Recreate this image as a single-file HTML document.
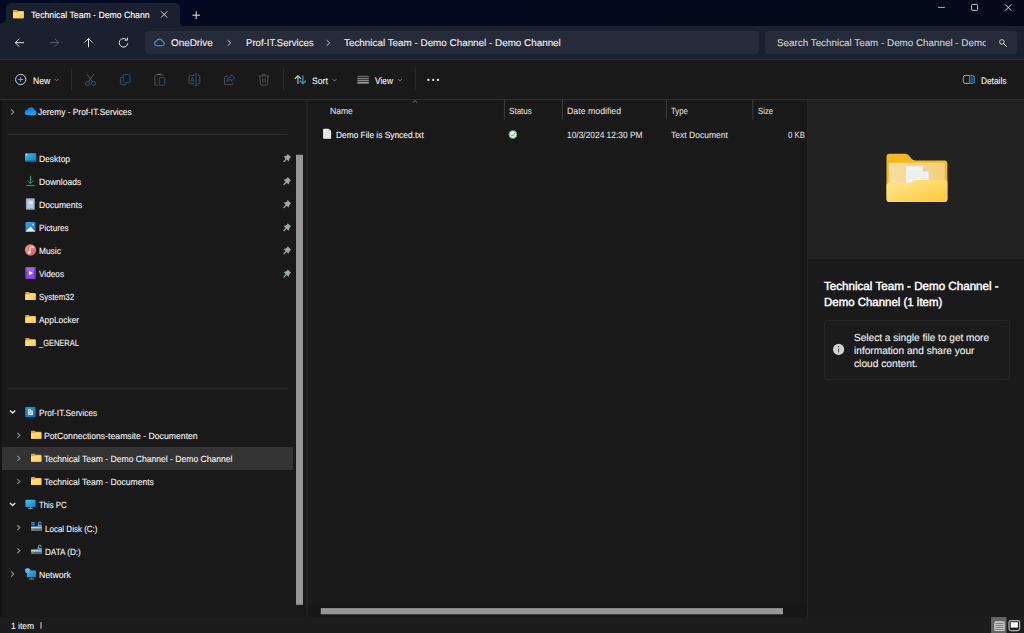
<!DOCTYPE html>
<html>
<head>
<meta charset="utf-8">
<title>Technical Team - Demo Channel - Demo Channel</title>
<style>
*{box-sizing:border-box;margin:0;padding:0}
html,body{width:1024px;height:633px;overflow:hidden;background:#191919}
body{font-family:"Liberation Sans","DejaVu Sans",sans-serif;position:relative;text-rendering:geometricPrecision}
.b{position:absolute}
.t{position:absolute;transform-origin:0 0;white-space:nowrap;line-height:20px;height:20px;-webkit-text-stroke:0.12px currentColor}
#ic{position:absolute;left:0;top:0;width:1024px;height:633px}
#titlebar{left:0;top:0;width:1024px;height:26px;background:linear-gradient(90deg,#020a24 0%,#020a22 30%,#030a1c 70%,#040a18 100%)}
#tab{left:6px;top:3px;width:173.5px;height:23px;background:#1b202e;border-radius:5px 5px 0 0}
#addr{left:0;top:26px;width:1024px;height:33px;background:#1b202e}
#addrline{left:0;top:59px;width:1024px;height:2px;background:linear-gradient(#2c2d33 0,#2c2d33 50%,#202021 50%,#202021 100%)}
#pathbox{left:145.2px;top:31px;width:613.8px;height:23px;background:#262b39;border-radius:4px}
#searchbox{left:765.3px;top:31px;width:252px;height:23px;background:#262b39;border-radius:4px}
#toolbar{left:0;top:60px;width:1024px;height:39px;background:#191919}
#toolline{left:0;top:99px;width:1024px;height:1px;background:#2e2e2e}
#leftedge{left:0;top:100px;width:2px;height:517px;background:#141414}
#navsel{left:2px;top:447px;width:291px;height:22.7px;background:#333333}
#split1{left:306.2px;top:100px;width:1.9px;height:517px;background:#212121}
#split2{left:806.8px;top:100px;width:1.4px;height:517px;background:#262626}
#details{left:808px;top:100px;width:216px;height:517px;background:#1a1a1a}
#preview{left:808px;top:100px;width:216px;height:159px;background:#222222}
#infobox{left:824px;top:320px;width:186px;height:60px;border:1px solid #262626;border-radius:3.5px;background:#1b1b1b}
#status{left:0;top:617px;width:1024px;height:16px;background:#1c1c1c}
#hstrack{left:308px;top:605px;width:499px;height:12px;background:#171717}
.line{position:absolute;background:#333}

</style>
</head>
<body>
<div class="b" id="titlebar"></div>
<div class="b" id="tab"></div>
<div class="b" id="addr"></div>
<div class="b" id="addrline"></div>
<div class="b" id="pathbox"></div>
<div class="b" id="searchbox"></div>
<div class="b" id="toolbar"></div>
<div class="b" id="toolline"></div>
<div class="b" id="leftedge"></div>
<div class="b" id="navsel"></div>
<div class="b" id="split1"></div>
<div class="b" id="details"></div>
<div class="b" id="preview"></div>
<div class="b" id="split2"></div>
<div class="b" id="infobox"></div>
<div class="b" id="hstrack"></div>
<div class="b" id="status"></div>

<svg id="ic" width="1024" height="633" viewBox="0 0 1024 633" fill="none">
<defs>
<linearGradient id="gFold" x1="0" y1="0" x2="1" y2="1"><stop offset="0" stop-color="#ffe59a"/><stop offset="1" stop-color="#ffcd45"/></linearGradient>
<linearGradient id="gBig" x1="0" y1="0" x2="1" y2="1"><stop offset="0" stop-color="#ffe794"/><stop offset="1" stop-color="#ffc938"/></linearGradient>
<linearGradient id="gInner" x1="0" y1="0" x2="1" y2="0"><stop offset="0" stop-color="#f8dfa0"/><stop offset="1" stop-color="#f1cf7c"/></linearGradient>
<linearGradient id="gDesk" x1="0" y1="0" x2="1" y2="1"><stop offset="0" stop-color="#35c1f1"/><stop offset="1" stop-color="#1576b8"/></linearGradient>
<linearGradient id="gMusic" x1="0" y1="0" x2="1" y2="1"><stop offset="0" stop-color="#f59a5c"/><stop offset="1" stop-color="#d4578f"/></linearGradient>
<linearGradient id="gCloud" x1="0.3" y1="0" x2="0.6" y2="1"><stop offset="0" stop-color="#0c6fd6"/><stop offset="0.55" stop-color="#1b8fe6"/><stop offset="1" stop-color="#2aa8f0"/></linearGradient>
<!-- small folder symbol 10.3 x 8.2 at origin -->
<symbol id="fold" viewBox="0 0 10.4 8.4" preserveAspectRatio="none" overflow="visible">
<path d="M0.6 0H3.6L4.8 1.1H9.8Q10.4 1.1 10.4 1.7V7.8Q10.4 8.4 9.8 8.4H0.6Q0 8.4 0 7.8V0.6Q0 0 0.6 0Z" fill="#e9aa1c"/>
<path d="M0 2.6H3.9L5 1.7H9.8Q10.4 1.7 10.4 2.3V7.8Q10.4 8.4 9.8 8.4H0.6Q0 8.4 0 7.8Z" fill="url(#gFold)"/>
</symbol>
<symbol id="chevR" viewBox="0 0 4 6" overflow="visible"><path d="M0.5 0.3L3.3 3L0.5 5.7" stroke="#959595" stroke-width="1.15" fill="none"/></symbol>
<symbol id="chevD" viewBox="0 0 6 4" overflow="visible"><path d="M0.4 0.5L2.7 2.9L5 0.5" stroke="#dcdcdc" stroke-width="1.1" fill="none"/></symbol>
<symbol id="pin" viewBox="0 0 8 8" overflow="visible"><path d="M4.5 -0.1L7.9 3.3L6.7 4L5.9 5.6L5.5 7.4L3.4 5.6L1.2 7.9L0.1 8L0.3 6.9L2.5 4.7L0.5 2.6L2.4 2.1L3.9 1.2Z" fill="#9ba8b1"/></symbol>
<linearGradient id="gSite" x1="0" y1="0" x2="1" y2="1"><stop offset="0" stop-color="#219de8"/><stop offset="1" stop-color="#0f68b8"/></linearGradient>
<linearGradient id="gPC" x1="0" y1="0" x2="1" y2="1"><stop offset="0" stop-color="#32d3ea"/><stop offset="1" stop-color="#1a7ad0"/></linearGradient>
<linearGradient id="gVid" x1="0" y1="0" x2="0" y2="1"><stop offset="0" stop-color="#a56bee"/><stop offset="1" stop-color="#8a3fe0"/></linearGradient>
<linearGradient id="gPic" x1="0" y1="0" x2="1" y2="1"><stop offset="0" stop-color="#3aa6ee"/><stop offset="1" stop-color="#1a6fd0"/></linearGradient>
</defs>

<!-- tab flares -->
<path d="M0 26V23.5Q5 23.5 6 19.5V26Z" fill="#1b202e"/>
<path d="M184 26Q180 25.6 179.5 21.5V26Z" fill="#1b202e"/>
<!-- tab folder -->
<use href="#fold" x="13" y="9.9" width="10.8" height="8.3"/>
<!-- tab close -->
<path d="M161 11.3L167.3 17.6M167.3 11.3L161 17.6" stroke="#e6e6e6" stroke-width="0.9"/>
<!-- plus -->
<path d="M192.4 15.2H200M196.2 11.4V19" stroke="#e6e6e6" stroke-width="1"/>
<!-- window controls -->
<path d="M938 7.4H944.8" stroke="#d8d8d8" stroke-width="0.8"/>
<rect x="971.6" y="4.4" width="6" height="6" rx="1.1" stroke="#dedede" stroke-width="0.9"/>
<path d="M1005 4.3L1011.4 10.7M1011.4 4.3L1005 10.7" stroke="#e2e2e2" stroke-width="0.9"/>
<!-- nav arrows -->
<path d="M24 42.7H15.4M19.3 38.7L15.3 42.7L19.3 46.7" stroke="#e4e4e4" stroke-width="1"/>
<path d="M50 42.7H58.6M54.7 38.7L58.7 42.7L54.7 46.7" stroke="#5b5f6b" stroke-width="1"/>
<path d="M88.5 47.2V38.6M84.4 42.6L88.5 38.5L92.6 42.6" stroke="#e4e4e4" stroke-width="1"/>
<path d="M127.8 43.3A4.3 4.3 0 1 1 126.4 39.6" stroke="#e4e4e4" stroke-width="1"/>
<path d="M124.7 40.2H127.4V37.6" stroke="#e4e4e4" stroke-width="1"/>
<!-- address cloud -->
<path d="M156.6 45.8A2.4 2.4 0 0 1 156.4 41.1A3.3 3.3 0 0 1 162.5 41.2A2.35 2.35 0 0 1 162.3 45.8Z" stroke="#409dd2" stroke-width="1.1"/>
<!-- breadcrumbs chevrons -->
<path d="M227.6 40.1L230.7 42.9L227.6 45.7" stroke="#d0d0d0" stroke-width="0.9"/>
<path d="M326.6 40.1L329.7 42.9L326.6 45.7" stroke="#d0d0d0" stroke-width="0.9"/>
<!-- search icon -->
<circle cx="1001.9" cy="41.9" r="2.3" stroke="#e0e0e0" stroke-width="0.9"/>
<path d="M1003.6 43.6L1006.8 46.8" stroke="#e0e0e0" stroke-width="1"/>

<!-- TOOLBAR -->
<circle cx="20.7" cy="79.5" r="5.1" stroke="#e8e8e8" stroke-width="0.9"/>
<path d="M18.1 79.5H23.3M20.7 76.9V82.1" stroke="#4cb0ea" stroke-width="1"/>
<path d="M54.6 78.9L56.5 80.8L58.4 78.9" stroke="#9a9a9a" stroke-width="0.8"/>
<path d="M71.6 68.2V90.7M283.4 68.2V90.7M415.3 68.2V90.7" stroke="#2e2e2e" stroke-width="1"/>
<!-- cut -->
<path d="M86.8 73.9L92.4 82M94 73.9L88.4 82" stroke="#5e5e5e" stroke-width="0.9"/>
<circle cx="87.4" cy="83.5" r="2" stroke="#285a78" stroke-width="1"/>
<circle cx="93.5" cy="83.5" r="2" stroke="#285a78" stroke-width="1"/>
<!-- copy -->
<path d="M122.8 77.2H121.6Q120.4 77.2 120.4 78.4V83.5Q120.4 84.7 121.6 84.7H125.2Q126.4 84.7 126.4 83.5" stroke="#555" stroke-width="0.9"/>
<rect x="123.2" y="74.6" width="6.9" height="8" rx="1.3" stroke="#285a78" stroke-width="0.9"/>
<!-- paste -->
<path d="M158.4 85.3H156.2Q154.9 85.3 154.9 84V76.1Q154.9 74.8 156.2 74.8H162.2Q163.4 74.8 163.5 76" stroke="#585858" stroke-width="0.9"/>
<path d="M157.2 74.3H161.4" stroke="#6a6a6a" stroke-width="1.1"/>
<rect x="159.2" y="77.6" width="5.6" height="7.7" rx="1.2" stroke="#285a78" stroke-width="0.9"/>
<!-- rename -->
<path d="M194.2 75.4H190.4Q189 75.4 189 76.8V82.4Q189 83.8 190.4 83.8H194.2M197.8 75.4H198.4Q199.8 75.4 199.8 76.8V82.4Q199.8 83.8 198.4 83.8H197.8" stroke="#585858" stroke-width="0.9"/>
<path d="M196 74V85.6M194.6 74H197.4M194.6 85.6H197.4" stroke="#285a78" stroke-width="0.9"/>
<path d="M190.6 81.8L192.4 77.3L194.2 81.8M191.2 80.4H193.6" stroke="#285a78" stroke-width="0.8"/>
<!-- share -->
<path d="M228.4 76.2H226Q224.5 76.2 224.5 77.7V83.2Q224.5 84.7 226 84.7H231.5Q233 84.7 233 83.2V82.8" stroke="#555" stroke-width="0.9"/>
<path d="M231 74.8L234.8 78L231 81.2V79.4Q228.4 79.4 226.8 81.6Q227.2 77.4 231 76.6Z" stroke="#285a78" stroke-width="0.9" stroke-linejoin="round"/>
<!-- trash -->
<path d="M258.6 76H269.2M262 76Q262 74.3 263.9 74.3Q265.8 74.3 265.8 76M259.7 76L260.5 84Q260.6 85.1 261.7 85.1H266.1Q267.2 85.1 267.3 84L268.1 76M262.8 78.4V82.6M265 78.4V82.6" stroke="#555" stroke-width="0.9"/>
<!-- sort -->
<path d="M297.9 84V76.4" stroke="#949494" stroke-width="1.5"/>
<path d="M294.9 78.7L297.9 75.8L300.9 78.7" stroke="#cfcfcf" stroke-width="1.2"/>
<path d="M302.9 75.4V83.2" stroke="#2f86bd" stroke-width="1.5"/>
<path d="M299.9 80.8L302.9 83.7L305.9 80.8" stroke="#3d9fd8" stroke-width="1.2"/>
<path d="M332.6 79.1L334.5 81L336.4 79.1" stroke="#9a9a9a" stroke-width="0.8"/>
<!-- view -->
<path d="M357.4 76.3H368.8" stroke="#a0a0a0" stroke-width="0.7"/><path d="M357.4 78.3H368.8" stroke="#a0a0a0" stroke-width="0.9"/><path d="M357.4 80.3H368.8" stroke="#a0a0a0" stroke-width="1.1"/><path d="M357.4 82.7H368.8" stroke="#9a9a9a" stroke-width="1.9"/>
<path d="M398 79.1L399.9 81L401.8 79.1" stroke="#9a9a9a" stroke-width="0.8"/>
<!-- dots -->
<circle cx="428.4" cy="79.9" r="1.15" fill="#f4f4f4"/><circle cx="433.2" cy="79.9" r="1.15" fill="#f4f4f4"/><circle cx="438" cy="79.9" r="1.15" fill="#f4f4f4"/>
<!-- details icon -->
<path d="M969.4 83.5H965.2Q963.3 83.5 963.3 81.6V77.3Q963.3 75.4 965.2 75.4H969.4" stroke="#ababab" stroke-width="1"/>
<path d="M969.4 75.4H972.4Q974.4 75.4 974.4 77.4V81.5Q974.4 83.5 972.4 83.5H969.4Z" stroke="#3690c8" stroke-width="1" fill="#1d3d52"/>
<path d="M970.9 77.7H972.9M970.9 79.4H972.9M970.9 81.1H972.9" stroke="#2f7fb2" stroke-width="0.7"/>

<!-- NAV PANE -->
<use href="#chevR" x="10.6" y="109.2" width="3.8" height="5.6"/>
<path d="M27.6 115.2C25.9 115.2 24.7 114 24.7 112.5C24.7 111 25.9 109.9 27.3 109.8C28 108.3 29.4 107.3 31 107.3C32.8 107.3 34.3 108.5 34.8 110.2C36 110.5 36.5 111.6 36.5 112.6C36.5 114 35.4 115.2 33.9 115.2Z" fill="url(#gCloud)"/>
<path d="M7.8 134.3H287.8M7.8 388.9H287.8" stroke="#333" stroke-width="1"/>
<!-- desktop -->
<rect x="25" y="153.2" width="11.2" height="8.7" rx="0.8" fill="url(#gDesk)"/>
<rect x="25" y="160.6" width="11.2" height="1.4" fill="#0f5a94"/>
<rect x="26" y="154.2" width="1.2" height="1.2" fill="#dff4ff"/>
<!-- downloads -->
<path d="M30.5 175.8V183.6M27.4 180.6L30.5 183.7L33.6 180.6M26.4 185.6H34.6" stroke="#22b08a" stroke-width="0.9"/>
<!-- documents -->
<rect x="25.9" y="198.2" width="8.9" height="11.5" rx="1" fill="#8fa3bf"/>
<rect x="27" y="199.4" width="6.7" height="9" fill="#b9c8dc"/>
<rect x="29.2" y="201.5" width="3.4" height="2.2" fill="#e9eef6"/>
<!-- pictures -->
<rect x="25.5" y="222.1" width="10" height="10" rx="0.9" fill="url(#gPic)"/>
<path d="M25.7 231.6L30.6 226.4L35.3 231.6Z" fill="#f4f9ff"/>
<rect x="32.4" y="223.9" width="1.5" height="1.5" fill="#e8f4ff"/>
<!-- music -->
<circle cx="30.5" cy="250" r="5.7" fill="url(#gMusic)"/>
<path d="M30.2 252.4V247.4L33.2 246.8V248.2" stroke="#fff" stroke-width="0.9"/>
<circle cx="29.2" cy="252.4" r="1.3" fill="#fff"/>
<!-- videos -->
<rect x="25.4" y="267.3" width="10.2" height="11.6" rx="0.9" fill="url(#gVid)"/>
<rect x="25.9" y="268.4" width="1.1" height="1" fill="#5a2ca6"/><rect x="34" y="268.4" width="1.1" height="1" fill="#5a2ca6"/><rect x="25.9" y="270.4" width="1.1" height="1" fill="#5a2ca6"/><rect x="34" y="270.4" width="1.1" height="1" fill="#5a2ca6"/><rect x="25.9" y="272.4" width="1.1" height="1" fill="#5a2ca6"/><rect x="34" y="272.4" width="1.1" height="1" fill="#5a2ca6"/><rect x="25.9" y="274.4" width="1.1" height="1" fill="#5a2ca6"/><rect x="34" y="274.4" width="1.1" height="1" fill="#5a2ca6"/><rect x="25.9" y="276.4" width="1.1" height="1" fill="#5a2ca6"/><rect x="34" y="276.4" width="1.1" height="1" fill="#5a2ca6"/>
<path d="M29.2 270.9L33 273.1L29.2 275.3Z" fill="#fff"/>
<!-- folders -->
<use href="#fold" x="25.3" y="292" width="10.4" height="8"/>
<use href="#fold" x="25.3" y="315" width="10.4" height="8"/>
<use href="#fold" x="25.3" y="338.1" width="10.4" height="8"/>
<!-- pins -->
<use href="#pin" x="283.2" y="154" width="8" height="8"/>
<use href="#pin" x="283.2" y="177.1" width="8" height="8"/>
<use href="#pin" x="283.2" y="200.2" width="8" height="8"/>
<use href="#pin" x="283.2" y="223.3" width="8" height="8"/>
<use href="#pin" x="283.2" y="246.4" width="8" height="8"/>
<use href="#pin" x="283.2" y="269.5" width="8" height="8"/>
<!-- nav scrollbar -->
<rect x="296" y="154.8" width="7" height="450" fill="#979797"/>
<!-- tree section -->
<path d="M10 410.5L12.6 413.1L15.2 410.5" stroke="#e6e6e6" stroke-width="1.4"/>
<rect x="25.3" y="406.9" width="10.3" height="10.3" rx="1" fill="url(#gSite)"/>
<path d="M28.2 409.2H30.9V410.6H32.9V415H28.2Z" fill="#eef6fd"/>
<path d="M28.9 410.6H30.2M28.9 412H32.2M29.6 413.6H31.6" stroke="#2a8ad6" stroke-width="0.7"/>
<use href="#chevR" x="16.9" y="432.7" width="3.6" height="5.4"/>
<use href="#fold" x="31" y="430.8" width="10.4" height="8"/>
<use href="#chevR" x="16.9" y="455.7" width="3.6" height="5.4"/>
<use href="#fold" x="31" y="453.8" width="10.4" height="8"/>
<use href="#chevR" x="16.9" y="478.8" width="3.6" height="5.4"/>
<use href="#fold" x="31" y="476.9" width="10.4" height="8"/>
<path d="M10 502.9L12.6 505.5L15.2 502.9" stroke="#e6e6e6" stroke-width="1.4"/>
<!-- this pc -->
<rect x="25.5" y="499.8" width="10" height="7.2" rx="0.6" fill="url(#gPC)"/>
<path d="M30.5 507V508.2M28.2 508.5H32.8" stroke="#8fa0ac" stroke-width="0.8"/>
<!-- local disk -->
<use href="#chevR" x="16.9" y="524.9" width="3.6" height="5.4"/>
<rect x="31" y="526.4" width="10.8" height="4.4" rx="0.6" fill="#c9cdd2"/>
<rect x="31" y="528.4" width="10.8" height="2.4" fill="#5f666e"/>
<rect x="32" y="529.2" width="1.4" height="0.9" fill="#4ad36a"/>
<rect x="31.3" y="521.9" width="1.6" height="1.6" fill="#2c9ae6"/><rect x="33.2" y="521.9" width="1.6" height="1.6" fill="#2c9ae6"/>
<rect x="31.3" y="523.8" width="1.6" height="1.6" fill="#2c9ae6"/><rect x="33.2" y="523.8" width="1.6" height="1.6" fill="#2c9ae6"/>
<path d="M38.4 526V523.4Q38.4 522 39.8 522Q41.2 522 41.2 523.4" stroke="#c9cdd2" stroke-width="0.8"/>
<rect x="37.6" y="524.6" width="4.2" height="2.6" rx="0.4" fill="#3ba1e8"/>
<!-- data -->
<use href="#chevR" x="16.9" y="548" width="3.6" height="5.4"/>
<rect x="31" y="549.5" width="10.8" height="4.6" rx="0.6" fill="#c9cdd2"/>
<rect x="31" y="551.6" width="10.8" height="2.5" fill="#5f666e"/>
<rect x="32" y="552.4" width="1.4" height="0.9" fill="#4ad36a"/>
<path d="M38.4 549.2V546.6Q38.4 545.2 39.8 545.2Q41.2 545.2 41.2 546.6" stroke="#c9cdd2" stroke-width="0.8"/>
<rect x="37.6" y="547.8" width="4.2" height="2.6" rx="0.4" fill="#3ba1e8"/>
<!-- network -->
<use href="#chevR" x="10.6" y="571.2" width="3.8" height="5.6"/>
<rect x="27" y="570.5" width="9" height="6.8" rx="0.6" fill="url(#gDesk)"/>
<path d="M31.5 577.3V578.8M29 579.1H34" stroke="#7c8f9c" stroke-width="0.9"/>
<circle cx="27.6" cy="570.8" r="2.7" fill="#3ea6ea"/>
<path d="M26.2 569.6Q27.6 568.8 28.6 570.2Q27.4 571.4 28.4 572.6" stroke="#d8f0ff" stroke-width="0.6"/>
<!-- status bar -->
<path d="M41 622.2V628.8" stroke="#dcdcdc" stroke-width="1"/>

<!-- MAIN -->
<path d="M412.8 102.6L415 100.5L417.2 102.6" stroke="#8a8a8a" stroke-width="0.8"/>
<path d="M504.4 100V119.4M562.3 100V119.4M666.4 100V119.4M752.8 100V119.4" stroke="#3f3f3f" stroke-width="1"/>
<!-- file icon -->
<path d="M323.7 128.7H328.7L331.1 131V138.7H323.7Q323.1 138.7 323.1 138.1V129.3Q323.1 128.7 323.7 128.7Z" fill="#ececec"/>
<path d="M328.7 128.7V131H331.1Z" fill="#c4c4c4"/>
<path d="M324.4 132.4H329.8M324.4 133.9H329.8M324.4 135.4H329.8M324.4 136.9H329.8" stroke="#d6d6d6" stroke-width="0.5"/>
<!-- status icon -->
<circle cx="512.9" cy="134.5" r="4" fill="#e9f5ec" stroke="#3d9a55" stroke-width="1"/>
<path d="M510.9 134.6L512.4 136.1L515 133.2" stroke="#3d9a55" stroke-width="1"/>
<!-- h scroll thumb -->
<rect x="320.8" y="608.1" width="462.2" height="6.2" fill="#979797"/>

<!-- DETAILS big folder -->
<path d="M889.5 153.7H905.2Q907.3 153.7 908.7 155.3L911.3 158.6Q912.7 160.4 915.1 160.4H944.4Q947.4 160.3 947.4 163.3V199Q947.4 202 944.4 202H889.5Q886.5 202 886.5 199V156.7Q886.5 153.7 889.5 153.7Z" fill="#f4b823"/>
<rect x="888.9" y="162.8" width="55.8" height="24" rx="1.5" fill="url(#gInner)"/>
<path d="M906 166.3H922.8L928.6 171.6V186H906Z" fill="#f4f4f4"/>
<path d="M922.8 166.3V171.6H928.6Z" fill="#cfcfcf"/>
<path d="M907.4 171.8H926.8M907.4 174H926.8M907.4 176.2H926.8M907.4 178.4H926.8" stroke="#e2e2e2" stroke-width="0.6"/>
<path d="M886.5 185.6Q886.5 182.9 889.2 182.9H908.6Q910.2 182.9 911.4 182L912.8 180.9Q914 180 915.6 180H944.7Q947.4 180 947.4 182.7V199Q947.4 202 944.4 202H889.5Q886.5 202 886.5 199Z" fill="url(#gBig)"/>
<!-- info icon -->
<circle cx="838.6" cy="349.4" r="5.6" fill="#d2d2d2"/>
<path d="M838.6 348.6V352.4" stroke="#484848" stroke-width="1"/>
<circle cx="838.6" cy="346.7" r="0.7" fill="#484848"/>
<!-- view buttons -->
<rect x="991.1" y="617" width="15.3" height="16" fill="#666"/>
<rect x="994.3" y="621.3" width="10.4" height="9.7" rx="1.6" fill="#cfcfcf"/>
<path d="M995.4 623.4H1003.6M995.4 625.4H1003.6M995.4 627.4H1003.6M995.4 629.4H1003.6" stroke="#5c5c5c" stroke-width="0.8"/>
<rect x="1009" y="620.6" width="10.6" height="10" rx="1.8" stroke="#b4b4b4" stroke-width="1.2"/>
<rect x="1010.7" y="622.2" width="7.2" height="5.4" fill="#fff"/>
</svg>

<div class="t" style="left:31.40px;top:5.00px;font-size:9.1px;color:#ffffff;font-weight:400;transform:scaleX(0.9551)">Technical Team - Demo Chann</div>
<div class="t" style="left:171.00px;top:34.00px;font-size:9.8px;color:#f1f1f1;font-weight:400;transform:scaleX(1.0075)">OneDrive</div>
<div class="t" style="left:245.50px;top:34.00px;font-size:9.8px;color:#f1f1f1;font-weight:400;transform:scaleX(0.9777)">Prof-IT.Services</div>
<div class="t" style="left:344.40px;top:34.00px;font-size:9.8px;color:#f1f1f1;font-weight:400;transform:scaleX(1.0062)">Technical Team - Demo Channel - Demo Channel</div>
<div class="t" style="width:207.64px;overflow:hidden;left:776.80px;top:34.00px;font-size:9.8px;color:#cfd1d6;font-weight:400;transform:scaleX(1.0037)">Search Technical Team - Demo Channel - Demo</div>
<div class="t" style="left:32.80px;top:71.00px;font-size:9.3px;color:#f1f1f1;font-weight:400;transform:scaleX(0.9243)">New</div>
<div class="t" style="left:312.00px;top:71.00px;font-size:9.3px;color:#f1f1f1;font-weight:400;transform:scaleX(0.9260)">Sort</div>
<div class="t" style="left:374.90px;top:71.00px;font-size:9.3px;color:#f1f1f1;font-weight:400;transform:scaleX(0.8957)">View</div>
<div class="t" style="left:980.70px;top:71.00px;font-size:9.3px;color:#f1f1f1;font-weight:400;transform:scaleX(0.8937)">Details</div>
<div class="t" style="left:38.30px;top:102.00px;font-size:9.0px;color:#f1f1f1;font-weight:400;transform:scaleX(0.9274)">Jeremy - Prof-IT.Services</div>
<div class="t" style="left:38.75px;top:149.00px;font-size:9.0px;color:#f1f1f1;font-weight:400;transform:scaleX(0.9400)">Desktop</div>
<div class="t" style="left:38.75px;top:172.00px;font-size:9.0px;color:#f1f1f1;font-weight:400;transform:scaleX(0.9488)">Downloads</div>
<div class="t" style="left:38.75px;top:195.00px;font-size:9.0px;color:#f1f1f1;font-weight:400;transform:scaleX(0.9499)">Documents</div>
<div class="t" style="left:38.75px;top:218.00px;font-size:9.0px;color:#f1f1f1;font-weight:400;transform:scaleX(0.9088)">Pictures</div>
<div class="t" style="left:38.75px;top:241.00px;font-size:9.0px;color:#f1f1f1;font-weight:400;transform:scaleX(0.9292)">Music</div>
<div class="t" style="left:38.75px;top:264.00px;font-size:9.0px;color:#f1f1f1;font-weight:400;transform:scaleX(0.9138)">Videos</div>
<div class="t" style="left:38.75px;top:287.00px;font-size:9.0px;color:#f1f1f1;font-weight:400;transform:scaleX(0.8781)">System32</div>
<div class="t" style="left:38.75px;top:310.00px;font-size:9.0px;color:#f1f1f1;font-weight:400;transform:scaleX(0.9330)">AppLocker</div>
<div class="t" style="left:38.75px;top:333.00px;font-size:9.0px;color:#f1f1f1;font-weight:400;transform:scaleX(0.8297)">_GENERAL</div>
<div class="t" style="left:38.75px;top:403.00px;font-size:9.0px;color:#f1f1f1;font-weight:400;transform:scaleX(0.9155)">Prof-IT.Services</div>
<div class="t" style="left:44.00px;top:426.00px;font-size:9.0px;color:#f1f1f1;font-weight:400;transform:scaleX(0.9631)">PotConnections-teamsite - Documenten</div>
<div class="t" style="left:44.00px;top:449.00px;font-size:9.0px;color:#f1f1f1;font-weight:400;transform:scaleX(0.9523)">Technical Team - Demo Channel - Demo Channel</div>
<div class="t" style="left:44.00px;top:472.00px;font-size:9.0px;color:#f1f1f1;font-weight:400;transform:scaleX(0.9524)">Technical Team - Documents</div>
<div class="t" style="left:38.75px;top:495.00px;font-size:9.0px;color:#f1f1f1;font-weight:400;transform:scaleX(0.8636)">This PC</div>
<div class="t" style="left:44.70px;top:519.00px;font-size:9.0px;color:#f1f1f1;font-weight:400;transform:scaleX(0.8896)">Local Disk (C:)</div>
<div class="t" style="left:44.70px;top:542.00px;font-size:9.0px;color:#f1f1f1;font-weight:400;transform:scaleX(0.9024)">DATA (D:)</div>
<div class="t" style="left:38.75px;top:565.00px;font-size:9.0px;color:#f1f1f1;font-weight:400;transform:scaleX(0.9647)">Network</div>
<div class="t" style="left:10.60px;top:616.00px;font-size:9.0px;color:#f1f1f1;font-weight:400;transform:scaleX(0.9382)">1 item</div>
<div class="t" style="left:329.80px;top:101.00px;font-size:9.0px;color:#dedede;font-weight:400;transform:scaleX(0.9535)">Name</div>
<div class="t" style="left:509.00px;top:101.00px;font-size:9.0px;color:#dedede;font-weight:400;transform:scaleX(0.8975)">Status</div>
<div class="t" style="left:566.90px;top:101.00px;font-size:9.0px;color:#dedede;font-weight:400;transform:scaleX(0.9742)">Date modified</div>
<div class="t" style="left:671.10px;top:101.00px;font-size:9.0px;color:#dedede;font-weight:400;transform:scaleX(0.8660)">Type</div>
<div class="t" style="left:757.50px;top:101.00px;font-size:9.0px;color:#dedede;font-weight:400;transform:scaleX(0.8678)">Size</div>
<div class="t" style="left:336.30px;top:125.00px;font-size:9.0px;color:#f1f1f1;font-weight:400;transform:scaleX(0.9277)">Demo File is Synced.txt</div>
<div class="t" style="left:567.30px;top:125.00px;font-size:9.0px;color:#dedede;font-weight:400;transform:scaleX(0.9314)">10/3/2024 12:30 PM</div>
<div class="t" style="left:671.10px;top:125.00px;font-size:9.0px;color:#dedede;font-weight:400;transform:scaleX(0.9495)">Text Document</div>
<div class="t" style="left:788.30px;top:125.00px;font-size:9.0px;color:#dedede;font-weight:400;transform:scaleX(0.8660)">0 KB</div>
<div class="t" style="-webkit-text-stroke:0.45px currentColor;left:823.90px;top:276.00px;font-size:11.8px;color:#ffffff;font-weight:400;transform:scaleX(0.9843)">Technical Team - Demo Channel -</div>
<div class="t" style="-webkit-text-stroke:0.45px currentColor;left:823.90px;top:292.00px;font-size:11.8px;color:#ffffff;font-weight:400;transform:scaleX(0.9700)">Demo Channel (1 item)</div>
<div class="t" style="left:853.80px;top:329.00px;font-size:10.4px;color:#f1f1f1;font-weight:400;transform:scaleX(0.9705)">Select a single file to get more</div>
<div class="t" style="left:853.80px;top:342.00px;font-size:10.4px;color:#f1f1f1;font-weight:400;transform:scaleX(0.9748)">information and share your</div>
<div class="t" style="left:853.80px;top:355.00px;font-size:10.4px;color:#f1f1f1;font-weight:400;transform:scaleX(0.9830)">cloud content.</div>
</body>
</html>
